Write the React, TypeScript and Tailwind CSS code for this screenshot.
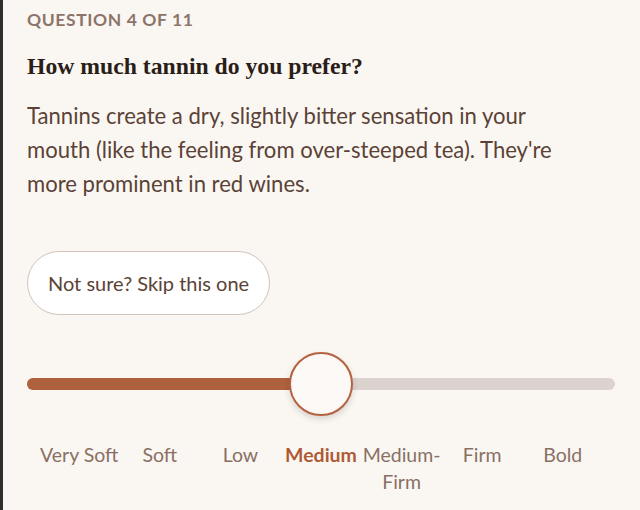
import React from "react";

const labels = ["Very Soft", "Soft", "Low", "Medium", "Medium-Firm", "Firm", "Bold"];

export default function App() {
  return (
    <div className="w-full h-[510px] overflow-hidden bg-[#faf7f3] border-l-[3px] border-[#2c302b] pl-[24px] pr-[25px] pt-[8px] font-['Lato','Liberation_Sans',sans-serif]">
      <div className="text-[17.5px] leading-6 font-bold uppercase text-[#8d7468] tracking-[0.6px]">Question 4 of 11</div>
      <h1 className="mt-[18px] text-[23.7px] leading-8 font-bold text-[#2b1d17] font-['Liberation_Serif',serif]">
        How much tannin do you prefer?
      </h1>
      <p className="mt-[17px] max-w-[562px] text-[22.1px] leading-[34px] text-[#5b4236]">
        Tannins create a dry, slightly bitter sensation in your mouth (like the feeling from over-steeped tea). They're more prominent in red wines.
      </p>
      <button className="mt-[50px] h-16 px-5 rounded-full bg-white border border-[#d3c2b9] text-[20px] text-[#5b4236]">
        Not sure? Skip this one
      </button>
      <div className="relative mt-[37px] h-16 flex items-center">
        <div className="w-full h-3 rounded-full bg-[#ddd3ce] overflow-hidden">
          <div className="h-full w-1/2 bg-[#ae613f]" />
        </div>
        <div className="absolute left-1/2 top-0 -translate-x-1/2 w-16 h-16 rounded-full bg-[#fbf8f5] border-2 border-[#b4623f] shadow-[0_3px_6px_rgba(0,0,0,0.15)]" />
      </div>
      <div className="mt-[25px] grid grid-cols-7 px-3 text-center text-[19.5px] leading-[27px] text-[#8a7064]">
        {labels.map((l) => (
          <div key={l} className={l === "Medium" ? "font-bold text-[#b05a35]" : ""}>
            {l}
          </div>
        ))}
      </div>
    </div>
  );
}
